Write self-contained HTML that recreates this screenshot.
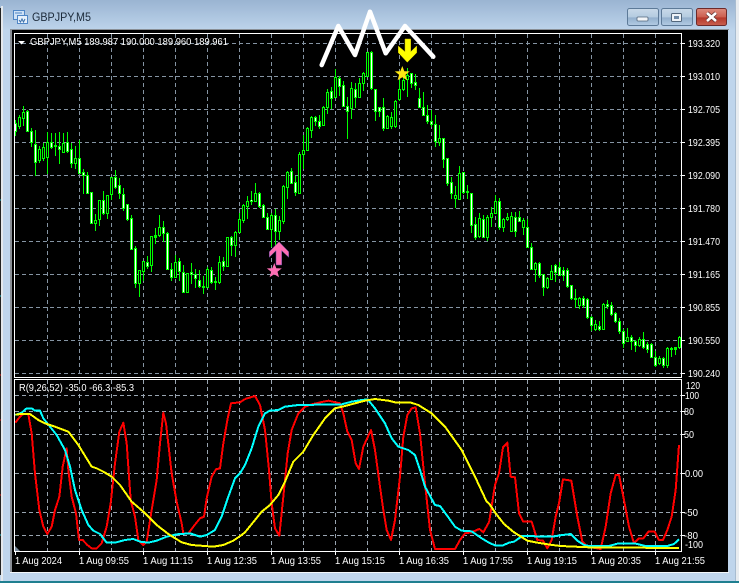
<!DOCTYPE html>
<html><head><meta charset="utf-8"><title>GBPJPY,M5</title>
<style>
html,body{margin:0;padding:0;background:#bcd3ea;overflow:hidden}
svg{display:block;position:absolute;left:0;top:0}
text{font-family:"Liberation Sans",sans-serif}
</style></head><body>
<svg width="739" height="583" viewBox="0 0 739 583" xmlns="http://www.w3.org/2000/svg">
<defs>
<linearGradient id="t" x1="0" y1="0" x2="0" y2="1"><stop offset="0" stop-color="#9ab4d2"/><stop offset="1" stop-color="#bdd4eb"/></linearGradient>
<linearGradient id="b" x1="0" y1="0" x2="0" y2="1"><stop offset="0" stop-color="#c9dae9"/><stop offset=".5" stop-color="#b4cbe0"/><stop offset=".55" stop-color="#93b0cd"/><stop offset="1" stop-color="#b3cce4"/></linearGradient>
<linearGradient id="r" x1="0" y1="0" x2="0" y2="1"><stop offset="0" stop-color="#dd8c7e"/><stop offset=".5" stop-color="#cc5f50"/><stop offset=".55" stop-color="#b5382b"/><stop offset="1" stop-color="#c9604f"/></linearGradient>
<clipPath id="sub"><rect x="15" y="380" width="666" height="171"/></clipPath>
</defs>
<rect width="739" height="583" fill="#bfd5ec"/>
<rect x="0" y="0" width="739" height="30" fill="url(#t)"/>
<rect x="0" y="8" width="1" height="567" fill="#222"/>
<rect x="1" y="6" width="2" height="575" fill="#e4e8ec"/>
<rect x="736" y="0" width="3" height="583" fill="#e8ecf0"/>
<rect x="735" y="0" width="1" height="583" fill="#a8bcd0"/>
<rect x="0" y="581" width="739" height="2" fill="#1f7f90"/>
<path d="M0 375h1M0 420h1M0 495h1" stroke="#e02020"/>
<path d="M0 200h1M0 296h1M0 535h1" stroke="#20c0d0"/>
<!-- title icon -->
<rect x="13.5" y="10.5" width="11" height="9" fill="#cfe2f6" stroke="#4f86c6"/>
<rect x="17.5" y="15.5" width="10" height="8" fill="#e6f0fb" stroke="#4f86c6"/>
<path d="M19 20l1.500 2 1.500-3 1.500 3 1.500-3" fill="none" stroke="#3a6ea8"/>
<path d="M15 13h7" stroke="#4f86c6"/>
<text x="32" y="21" font-size="12" fill="#1c2a3a" textLength="59" lengthAdjust="spacingAndGlyphs">GBPJPY,M5</text>
<!-- buttons -->
<rect x="627.500" y="8.500" width="31" height="17" rx="2" fill="url(#b)" stroke="#5d7a98"/>
<rect x="637" y="17" width="11" height="4" rx="1" fill="#f2f5f8" stroke="#53677c" stroke-width=".8"/>
<rect x="661.500" y="8.500" width="31" height="17" rx="2" fill="url(#b)" stroke="#5d7a98"/>
<rect x="671.500" y="13.500" width="10" height="8" rx="1" fill="#eef3f8" stroke="#53677c"/>
<rect x="674" y="16" width="5" height="3" fill="#6f8aa6"/>
<rect x="696.500" y="8.500" width="30" height="17" rx="2" fill="url(#r)" stroke="#6d2a2a"/>
<path d="M707 13l9 8M716 13l-9 8" stroke="#5a3030" stroke-width="4"/>
<path d="M707 13l9 8M716 13l-9 8" stroke="#fff" stroke-width="2.600"/>
<!-- chart background -->
<rect x="10" y="29" width="2" height="544" fill="#8a8f96"/>
<rect x="12" y="30" width="716" height="542" fill="#000"/>
<rect x="10" y="29" width="719" height="1" fill="#8a9097"/>
<rect x="10" y="572" width="719" height="1" fill="#f2f6fa"/>
<!-- grid -->
<g fill="none" stroke="#8594a3" stroke-width="1" stroke-dasharray="4 3">
<path d="M15 43.500H681M15 76.500H681M15 109.500H681M15 142.500H681M15 175.500H681M15 208.500H681M15 241.500H681M15 274.500H681M15 307.500H681M15 340.500H681M15 373.500H681"/>
<path d="M47.500 34V376M79.500 34V376M111.500 34V376M143.500 34V376M175.500 34V376M207.500 34V376M239.500 34V376M271.500 34V376M303.500 34V376M335.500 34V376M367.500 34V376M399.500 34V376M431.500 34V376M463.500 34V376M495.500 34V376M527.500 34V376M559.500 34V376M591.500 34V376M623.500 34V376M655.500 34V376"/>
<path stroke="#98a4b0" d="M15 395.500H681M15 411.500H681M15 434.500H681M15 473.500H681M15 512.500H681M15 535.500H681"/>
<path stroke="#98a4b0" d="M47.500 380V551M79.500 380V551M111.500 380V551M143.500 380V551M175.500 380V551M207.500 380V551M239.500 380V551M271.500 380V551M303.500 380V551M335.500 380V551M367.500 380V551M399.500 380V551M431.500 380V551M463.500 380V551M495.500 380V551M527.500 380V551M559.500 380V551M591.500 380V551M623.500 380V551M655.500 380V551"/>
</g>
<!-- wicks -->
<path fill="none" stroke="#00ff00" stroke-width="1" d="M15.500 120V136M19.500 115V129M23.500 106V126M27.500 110V132M31.500 128V147M35.500 130V176M39.500 146V163M43.500 143V161M47.500 132V174M51.500 133V149M55.500 133V156M59.500 132V164M63.500 133V153M67.500 132V153M71.500 143V168M75.500 146V169M79.500 140V174M83.500 169V194M87.500 172V194M91.500 192V224M95.500 214V231M99.500 200V226M103.500 191V215M107.500 195V219M111.500 177V200M115.500 170V189M119.500 178V199M123.500 188V211M127.500 204V221M131.500 215V250M135.500 246V288M139.500 270V297M143.500 261V281M147.500 256V269M151.500 236V272M155.500 228V244M159.500 215V237M163.500 221V242M167.500 232V270M171.500 263V281M175.500 255V278M179.500 258V281M183.500 265V293M187.500 273V293M191.500 263V284M195.500 269V288M199.500 270V288M203.500 276V294M207.500 267V288M211.500 267V284M215.500 277V290M219.500 256V284M223.500 257V271M227.500 237V267M231.500 236V256M235.500 231V257M239.500 213V233M243.500 204V223M247.500 196V219M251.500 191V205M255.500 183V202M259.500 192V208M263.500 204V218M267.500 213V230M271.500 213V247M275.500 209V246M279.500 216V240M283.500 185V224M287.500 171V199M291.500 168V184M295.500 176V196M299.500 152V194M303.500 135V169M307.500 127V151M311.500 116V138M315.500 116V126M319.500 115V129M323.500 106V126M327.500 89V114M331.500 87V109M335.500 69V98M339.500 76V96M343.500 81V107M347.500 97V139M351.500 82V119M355.500 83V108M359.500 78V98M363.500 72V91M367.500 52V77M371.500 51V90M375.500 89V121M379.500 107V117M383.500 98V131M387.500 115V129M391.500 112V129M395.500 100V128M399.500 80V101M403.500 73V91M407.500 68V97M411.500 73V88M415.500 74V90M419.500 88V108M423.500 92V116M427.500 105V124M431.500 110V127M435.500 115V147M439.500 125V146M443.500 138V168M447.500 158V186M451.500 177V199M455.500 186V208M459.500 166V200M463.500 172V194M467.500 185V199M471.500 193V233M475.500 217V240M479.500 213V238M483.500 215V238M487.500 215V241M491.500 207V227M495.500 195V214M499.500 198V230M503.500 218V232M507.500 213V221M511.500 212V232M515.500 212V237M519.500 211V222M523.500 218V235M527.500 219V248M531.500 243V270M535.500 262V282M539.500 262V278M543.500 274V296M547.500 277V289M551.500 265V280M555.500 264V282M559.500 262V276M563.500 267V281M567.500 268V288M571.500 285V300M575.500 289V308M579.500 297V309M583.500 296V308M587.500 298V319M591.500 316V331M595.500 320V331M599.500 321V331M603.500 303V330M607.500 300V309M611.500 302V316M615.500 312V323M619.500 318V334M623.500 329V348M627.500 328V342M631.500 335V350M635.500 340V352M639.500 337V347M643.500 332V349M647.500 342V353M651.500 343V358M655.500 351V367M659.500 356V365M663.500 357V368M667.500 347V368M671.500 347V357M675.500 347V355M679.500 336V349"/>
<!-- bodies -->
<path fill="none" stroke="#00ff00" stroke-width="3" d="M15.500 123V132M19.500 117V127M23.500 112V119M27.500 111V132M31.500 131V143M35.500 144V163M39.500 149V161M43.500 147V159M47.500 142V158M51.500 142V148M55.500 145V147M59.500 146V150M63.500 143V153M67.500 142V152M71.500 149V164M75.500 158V164M79.500 158V174M83.500 172V176M87.500 175V194M91.500 192V224M95.500 220V224M99.500 200V220M103.500 200V214M107.500 195V214M111.500 177V195M115.500 177V188M119.500 185V194M123.500 194V209M127.500 204V220M131.500 218V250M135.500 248V284M139.500 270V284M143.500 261V272M147.500 262V267M151.500 236V266M155.500 235V238M159.500 227V236M163.500 227V234M167.500 233V270M171.500 269V278M175.500 262V278M179.500 261V272M183.500 272V293M187.500 273V293M191.500 272V275M195.500 274V279M199.500 280V287M203.500 286V288M207.500 269V288M211.500 270V283M215.500 281V283M219.500 262V283M223.500 261V267M227.500 237V267M231.500 237V246M235.500 232V246M239.500 219V233M243.500 205V221M247.500 201V207M251.500 200V202M255.500 193V202M259.500 193V207M263.500 205V218M267.500 217V230M271.500 215V230M275.500 215V232M279.500 220V232M283.500 186V222M287.500 172V188M291.500 171V184M295.500 182V193M299.500 154V194M303.500 150V155M307.500 128V151M311.500 117V131M315.500 117V122M319.500 121V127M323.500 107V126M327.500 92V108M331.500 91V99M335.500 77V98M339.500 78V87M343.500 85V107M347.500 106V112M351.500 88V109M355.500 89V98M359.500 83V98M363.500 73V84M367.500 52V77M371.500 52V89M375.500 89V112M379.500 107V112M383.500 107V129M387.500 116V129M391.500 117V127M395.500 101V127M399.500 89V100M403.500 80V90M407.500 75V80M411.500 73V84M415.500 82V86M419.500 98V108M423.500 107V116M427.500 115V122M431.500 121V125M435.500 124V142M439.500 138V143M443.500 138V160M447.500 158V184M451.500 182V194M455.500 195V199M459.500 173V200M463.500 172V193M467.500 191V193M471.500 193V226M475.500 224V238M479.500 218V237M483.500 219V238M487.500 217V238M491.500 213V218M495.500 201V214M499.500 201V228M503.500 219V228M507.500 217V220M511.500 216V232M515.500 217V232M519.500 217V222M523.500 220V228M527.500 227V248M531.500 247V270M535.500 263V270M539.500 263V276M543.500 274V288M547.500 278V288M551.500 271V280M555.500 265V273M559.500 267V276M563.500 270V276M567.500 270V287M571.500 285V299M575.500 298V300M579.500 298V306M583.500 298V306M587.500 299V318M591.500 317V326M595.500 324V330M599.500 326V330M603.500 304V330M607.500 304V307M611.500 305V315M615.500 313V322M619.500 321V332M623.500 331V344M627.500 337V342M631.500 337V342M635.500 341V346M639.500 339V346M643.500 339V348M647.500 344V350M651.500 344V358M655.500 357V366M659.500 358V364M663.500 358V366M667.500 348V366M671.500 348V350M675.500 347V350M679.500 337V348"/>
<!-- bear interior -->
<path fill="none" stroke="#fff" stroke-width="1" d="M15.500 124V131M27.500 112V131M31.500 132V142M35.500 145V162M51.500 143V147M59.500 147V149M67.500 143V151M71.500 150V163M79.500 159V173M83.500 173V175M87.500 176V193M91.500 193V223M103.500 201V213M115.500 178V187M119.500 186V193M123.500 195V208M127.500 205V219M131.500 219V249M135.500 249V283M147.500 263V266M163.500 228V233M167.500 234V269M171.500 270V277M179.500 262V271M183.500 273V292M191.500 273V274M195.500 275V278M199.500 281V286M211.500 271V282M223.500 262V266M231.500 238V245M251.500 200V201M259.500 194V206M263.500 206V217M267.500 218V229M275.500 216V231M291.500 172V183M295.500 183V192M315.500 118V121M319.500 122V126M331.500 92V98M339.500 79V86M343.500 86V106M347.500 107V111M355.500 90V97M371.500 53V88M375.500 90V111M379.500 108V111M383.500 108V128M411.500 74V83M415.500 83V85M419.500 99V107M423.500 108V115M427.500 116V121M431.500 122V124M435.500 125V141M443.500 139V159M447.500 159V183M451.500 183V193M463.500 173V192M471.500 194V225M475.500 225V237M483.500 220V237M499.500 202V227M515.500 218V231M519.500 218V221M527.500 228V247M531.500 248V269M539.500 264V275M543.500 275V287M555.500 266V272M559.500 268V275M563.500 271V275M567.500 271V286M571.500 286V298M583.500 299V305M587.500 300V317M591.500 318V325M599.500 327V329M607.500 305V306M611.500 306V314M615.500 314V321M619.500 322V331M623.500 332V343M631.500 338V341M635.500 342V345M643.500 340V347M647.500 345V349M651.500 345V357M655.500 358V365M663.500 359V365"/>
<!-- bull interior -->
<path fill="none" stroke="#000" stroke-width="1" d="M19.500 118V126M23.500 113V118M39.500 150V160M43.500 148V158M47.500 143V157M63.500 144V152M75.500 159V163M95.500 221V223M99.500 201V219M107.500 196V213M111.500 178V194M139.500 271V283M143.500 262V271M151.500 237V265M159.500 228V235M175.500 263V277M187.500 274V292M207.500 270V287M219.500 263V282M227.500 238V266M235.500 233V245M239.500 220V232M243.500 206V220M247.500 202V206M255.500 194V201M271.500 216V229M279.500 221V231M283.500 187V221M287.500 173V187M299.500 155V193M303.500 151V154M307.500 129V150M311.500 118V130M323.500 108V125M327.500 93V107M335.500 78V97M351.500 89V108M359.500 84V97M363.500 74V83M367.500 53V76M387.500 117V128M391.500 118V126M395.500 102V126M399.500 90V99M403.500 81V89M407.500 76V79M439.500 139V142M455.500 196V198M459.500 174V199M479.500 219V236M487.500 218V237M491.500 214V217M495.500 202V213M503.500 220V227M507.500 218V219M511.500 217V231M523.500 221V227M535.500 264V269M547.500 279V287M551.500 272V279M579.500 299V305M595.500 325V329M603.500 305V329M627.500 338V341M639.500 340V345M659.500 359V363M667.500 349V365M679.500 338V347"/>
<!-- frame lines -->
<g fill="none" stroke="#fff" stroke-width="1">
<path d="M14.500 33.500H681.500V377.500H14.500ZM14.500 379.500H681.500V551.500H14.500Z"/>
<path d="M682 43.500h3M682 76.500h3M682 109.500h3M682 142.500h3M682 175.500h3M682 208.500h3M682 241.500h3M682 274.500h3M682 307.500h3M682 340.500h3M682 373.500h3"/>
<path d="M682 395.500h3M682 411.500h3M682 434.500h3M682 473.500h3M682 512.500h3M682 535.500h3"/>
<path d="M15.500 552v3M79.500 552v3M143.500 552v3M207.500 552v3M271.500 552v3M335.500 552v3M399.500 552v3M463.500 552v3M527.500 552v3M591.500 552v3M655.500 552v3"/>
</g>
<path d="M15 546l5 5h-5z" fill="#778899"/>
<!-- indicators -->
<g clip-path="url(#sub)" fill="none" stroke-width="6" stroke-linejoin="round" shape-rendering="crispEdges">
<g transform="translate(0 370) scale(.33333)">
<polyline stroke="#ff0000" points="46,158 60,140 70,132 85,132 95,190 105,310 118,420 130,470 142,492 155,470 165,420 178,380 188,290 200,235 205,300 215,380 228,430 237,510 248,510 262,525 275,535 290,535 305,520 320,470 332,400 345,280 358,185 370,158 380,220 392,390 405,440 415,510 430,525 440,515 455,420 470,330 480,220 490,128 498,160 515,310 530,395 545,460 550,490 565,490 580,470 600,445 612,440 620,385 635,320 648,298 660,295 670,220 683,145 693,100 720,97 735,87"/>
</g>
<g transform="translate(245 370) scale(.33333)">
<polyline stroke="#ff0000" points="0,87 30,78 45,105 60,180 72,300 80,400 90,475 103,497 115,380 128,250 140,180 160,130 180,110 200,103 235,95 250,92 285,100 295,130 307,185 320,210 332,280 342,297 355,230 378,180 390,240 405,350 415,420 425,480 438,510 450,450 465,320 475,200 487,135 500,115 512,112 525,190 540,340 555,480 570,537 630,537 645,510 660,490 680,487 695,480 703,477 715,487 730,460 732,458"/>
</g>
<g transform="translate(489 370) scale(.33333)">
<polyline stroke="#ff0000" points="0,458 18,345 30,310 42,232 55,218 65,320 78,322 90,430 103,455 128,455 145,510 162,512 175,535 188,510 200,440 210,400 222,328 247,332 265,440 280,515 295,530 335,537 350,470 365,370 380,315 390,315 405,390 420,470 435,520 450,505 463,505 478,485 497,485 510,510 522,510 535,480 548,440 560,360 570,225"/>
</g>
<g transform="translate(0 370) scale(.33333)">
<polyline stroke="#00ffff" points="46,135 65,128 80,115 95,115 105,122 120,122 130,145 150,170 170,195 195,240 210,290 225,360 245,420 265,465 280,482 300,492 320,518 345,518 375,510 400,507 420,515 445,518 470,512 500,500 530,493 570,490 600,500 620,495 645,480 665,440 685,380 705,325 720,310 735,285"/>
</g>
<g transform="translate(245 370) scale(.33333)">
<polyline stroke="#00ffff" points="0,285 20,235 40,170 60,130 75,122 100,120 120,110 160,105 290,103 320,95 350,90 368,88 390,115 420,160 440,205 460,230 490,240 510,255 525,300 540,350 570,405 585,408 605,435 630,470 650,482 680,484 710,505 732,518"/>
</g>
<g transform="translate(489 370) scale(.33333)">
<polyline stroke="#00ffff" points="0,518 20,527 40,527 60,518 75,515 100,498 190,500 220,495 245,492 265,512 285,525 300,528 360,528 385,521 440,521 470,528 535,528 555,522 570,508"/>
</g>
<g transform="translate(0 370) scale(.33333)">
<polyline stroke="#ffff00" points="46,133 90,132 115,150 135,160 165,170 205,185 235,225 275,290 290,295 310,305 335,320 360,345 395,395 430,425 470,465 505,492 545,517 575,525 615,528 640,530 670,525 700,512 725,495 735,487"/>
</g>
<g transform="translate(245 370) scale(.33333)">
<polyline stroke="#ffff00" points="0,487 30,450 50,425 75,405 100,375 120,335 145,275 175,245 205,195 240,145 270,115 300,108 330,100 360,92 390,87 430,92 450,97 495,97 520,105 560,130 600,170 650,240 690,320 725,395 732,400"/>
</g>
<g transform="translate(489 370) scale(.33333)">
<polyline stroke="#ffff00" points="0,400 20,430 45,462 75,487 115,512 145,518 190,525 215,528 300,532 570,534"/>
</g>
</g>
<!-- annotations -->
<polyline points="321.700,65 338.300,26 355,55 370,11.700 385.700,53.300 405,26 433.300,56.700" fill="none" stroke="#fff" stroke-width="4.500" stroke-linejoin="round" stroke-linecap="round"/>
<path d="M405 39h5.700v12.700l6-5.700v6.700l-9.400 9.600-9-9.600V46l6.700 5.700z" fill="#ffff00" stroke="#c9b800" stroke-width=".5"/>
<path d="M402.300 66l2 5.200 5.500.2-4.300 3.400 1.500 5.400-4.700-3-4.700 3 1.500-5.400-4.300-3.400 5.500-.2z" fill="#ffe812"/>
<path d="M279 241.700l9.700 10v5.600l-7-6.600V265H276v-14.300l-6.700 6.600v-5.600z" fill="#ff6eb4" stroke="#5a4aa0" stroke-width=".5"/>
<path d="M274.300 263l2 5.200 5.500.2-4.300 3.400 1.500 5.400-4.700-3-4.700 3 1.500-5.400-4.300-3.400 5.500-.2z" fill="#ff6eb4"/>
<!-- labels -->
<g fill="#fff" font-size="10.500">
<path d="M18 41h7l-3.500 3.500z" fill="#fff"/>
<text x="30" y="45" textLength="198" lengthAdjust="spacingAndGlyphs">GBPJPY,M5  189.987 190.000 189.960 189.961</text>
<text x="19" y="391" textLength="115" lengthAdjust="spacingAndGlyphs">R(9,26,52) -35.0 -66.3 -85.3</text>
<text x="688" y="47" textLength="32" lengthAdjust="spacingAndGlyphs">193.320</text>
<text x="688" y="80" textLength="32" lengthAdjust="spacingAndGlyphs">193.010</text>
<text x="688" y="113" textLength="32" lengthAdjust="spacingAndGlyphs">192.705</text>
<text x="688" y="146" textLength="32" lengthAdjust="spacingAndGlyphs">192.395</text>
<text x="688" y="179" textLength="32" lengthAdjust="spacingAndGlyphs">192.090</text>
<text x="688" y="212" textLength="32" lengthAdjust="spacingAndGlyphs">191.780</text>
<text x="688" y="245" textLength="32" lengthAdjust="spacingAndGlyphs">191.470</text>
<text x="688" y="278" textLength="32" lengthAdjust="spacingAndGlyphs">191.165</text>
<text x="688" y="311" textLength="32" lengthAdjust="spacingAndGlyphs">190.855</text>
<text x="688" y="344" textLength="32" lengthAdjust="spacingAndGlyphs">190.550</text>
<text x="688" y="377" textLength="32" lengthAdjust="spacingAndGlyphs">190.240</text>
<text x="686" y="389" textLength="14" lengthAdjust="spacingAndGlyphs">120</text>
<text x="685" y="399" textLength="14" lengthAdjust="spacingAndGlyphs">100</text>
<text x="684" y="415" textLength="10" lengthAdjust="spacingAndGlyphs">80</text>
<text x="684" y="438" textLength="10" lengthAdjust="spacingAndGlyphs">50</text>
<text x="685" y="477" textLength="18" lengthAdjust="spacingAndGlyphs">0.00</text>
<text x="684" y="516" textLength="14" lengthAdjust="spacingAndGlyphs">-50</text>
<text x="684" y="539" textLength="14" lengthAdjust="spacingAndGlyphs">-80</text>
<text x="685" y="548" textLength="18" lengthAdjust="spacingAndGlyphs">-100</text>
<text x="15" y="564" textLength="47" lengthAdjust="spacingAndGlyphs">1 Aug 2024</text>
<text x="79" y="564" textLength="50" lengthAdjust="spacingAndGlyphs">1 Aug 09:55</text>
<text x="143" y="564" textLength="50" lengthAdjust="spacingAndGlyphs">1 Aug 11:15</text>
<text x="207" y="564" textLength="50" lengthAdjust="spacingAndGlyphs">1 Aug 12:35</text>
<text x="271" y="564" textLength="50" lengthAdjust="spacingAndGlyphs">1 Aug 13:55</text>
<text x="335" y="564" textLength="50" lengthAdjust="spacingAndGlyphs">1 Aug 15:15</text>
<text x="399" y="564" textLength="50" lengthAdjust="spacingAndGlyphs">1 Aug 16:35</text>
<text x="463" y="564" textLength="50" lengthAdjust="spacingAndGlyphs">1 Aug 17:55</text>
<text x="527" y="564" textLength="50" lengthAdjust="spacingAndGlyphs">1 Aug 19:15</text>
<text x="591" y="564" textLength="50" lengthAdjust="spacingAndGlyphs">1 Aug 20:35</text>
<text x="655" y="564" textLength="50" lengthAdjust="spacingAndGlyphs">1 Aug 21:55</text>
</g>
</svg>
</body></html>
